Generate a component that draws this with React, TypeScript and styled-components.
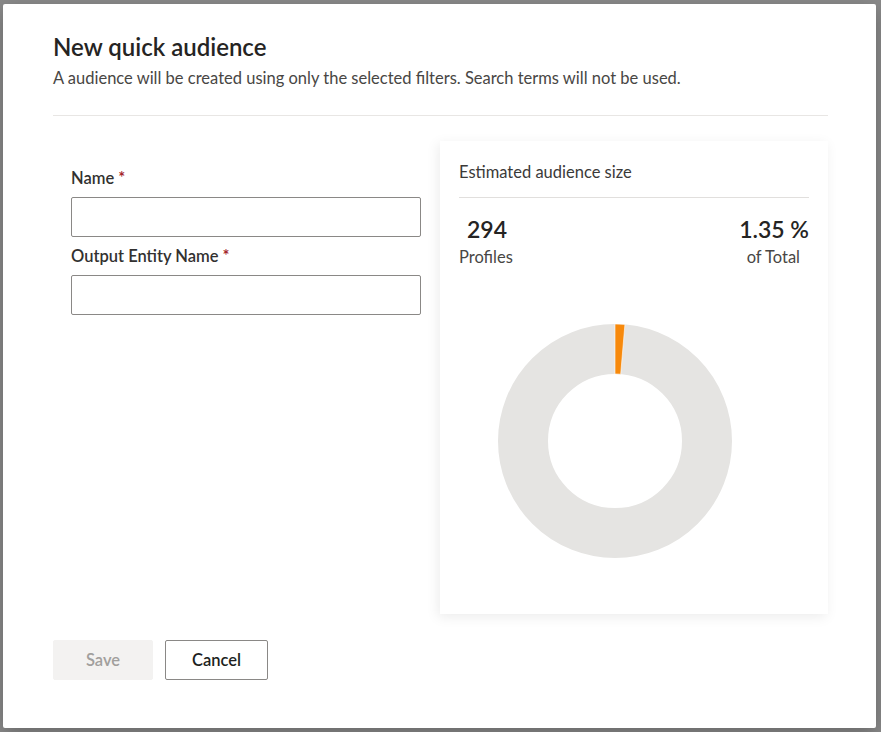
import React from "react";
import styled, { createGlobalStyle } from "styled-components";

const GlobalStyle = createGlobalStyle`
  html, body {
    margin: 0;
    padding: 0;
    font-family: Lato, "Noto Sans", "Liberation Sans", sans-serif;
  }
`;

const Overlay = styled.div`
  width: 881px;
  height: 732px;
  box-sizing: border-box;
  padding: 4px 5px 4px 3px;
  background: #8a8a8a;
`;

const Modal = styled.div`
  width: 100%;
  height: 100%;
  box-sizing: border-box;
  padding: 28px 48px 48px 50px;
  background: #ffffff;
  border-radius: 2px;
  box-shadow: 0 6px 20px rgba(0, 0, 0, 0.25);
  display: flex;
  flex-direction: column;
`;

const Title = styled.h1`
  margin: 0;
  font-size: 24px;
  line-height: 30px;
  font-weight: 600;
  color: #252423;
`;

const Subtitle = styled.p`
  margin: 6px 0 0;
  font-size: 16.5px;
  line-height: 20px;
  color: #484644;
`;

const Divider = styled.hr`
  border: none;
  border-top: 1px solid #e8e6e4;
  margin: 27px 0 0;
`;

const Body = styled.div`
  display: grid;
  grid-template-columns: 387px 388px;
  margin-top: 25px;
`;

const FormColumn = styled.div`
  padding: 27px 19px 0 18px;
  display: flex;
  flex-direction: column;
`;

const Label = styled.label`
  font-size: 16.5px;
  line-height: 20px;
  font-weight: 600;
  color: #323130;
  margin-bottom: 9px;
`;

const Required = styled.span`
  color: #a4262c;
  margin-left: 4px;
`;

const Input = styled.input`
  width: 100%;
  height: 40px;
  box-sizing: border-box;
  border: 1px solid #8a8886;
  border-radius: 2px;
  margin-bottom: 9px;
  padding: 0 10px;
  font-family: inherit;
  font-size: 16px;
  outline: none;
`;

const Card = styled.div`
  height: 473px;
  box-sizing: border-box;
  padding: 21px 19px 0;
  background: #ffffff;
  box-shadow: -2px 3px 12px rgba(0, 0, 0, 0.08);
  display: flex;
  flex-direction: column;
`;

const CardTitle = styled.div`
  font-size: 16.5px;
  line-height: 20px;
  color: #3b3a39;
  padding-bottom: 15px;
  border-bottom: 1px solid #e1dfdd;
`;

const Stats = styled.div`
  display: flex;
  justify-content: space-between;
  margin-top: 16px;
`;

const Stat = styled.div<{ $align: "left" | "right" }>`
  display: flex;
  flex-direction: column;
  align-items: ${(p) => (p.$align === "left" ? "flex-start" : "flex-end")};
`;

const StatValue = styled.div<{ $indent?: number }>`
  font-size: 23px;
  line-height: 30px;
  font-weight: 600;
  color: #252423;
  padding-left: ${(p) => p.$indent || 0}px;
`;

const StatLabel = styled.div<{ $shift?: number }>`
  font-size: 16.5px;
  line-height: 20px;
  color: #484644;
  margin-top: 3px;
  padding-right: ${(p) => p.$shift || 0}px;
`;

const ChartArea = styled.div`
  flex: 1;
  display: flex;
  justify-content: flex-start;
  padding: 57px 0 0 39px;
`;

const Footer = styled.div`
  display: flex;
  gap: 12px;
  margin-top: 26px;
`;

const Button = styled.button<{ $variant: "disabled" | "default" }>`
  height: 40px;
  box-sizing: border-box;
  padding: 0 26px;
  min-width: 100px;
  border-radius: 2px;
  font-family: inherit;
  font-size: 16.5px;
  font-weight: 600;
  cursor: pointer;
  border: 1px solid
    ${(p) => (p.$variant === "disabled" ? "#f3f2f1" : "#8a8886")};
  background: ${(p) => (p.$variant === "disabled" ? "#f3f2f1" : "#ffffff")};
  color: ${(p) => (p.$variant === "disabled" ? "#a19f9d" : "#201f1e")};
`;

const Donut = ({ percent }: { percent: number }) => {
  const outer = 117;
  const inner = 67;
  const cx = 117;
  const cy = 117;
  const angle = (percent / 100) * Math.PI * 2;
  const p = (r: number, a: number) =>
    `${cx + r * Math.sin(a)} ${cy - r * Math.cos(a)}`;
  const slice = `M ${p(outer, 0)} A ${outer} ${outer} 0 0 1 ${p(
    outer,
    angle
  )} L ${p(inner, angle)} A ${inner} ${inner} 0 0 0 ${p(inner, 0)} Z`;
  return (
    <svg width="234" height="234" viewBox="0 0 234 234">
      <circle
        cx={cx}
        cy={cy}
        r={(outer + inner) / 2}
        fill="none"
        stroke="#e5e4e2"
        strokeWidth={outer - inner}
      />
      <path d={slice} fill="#f7890c" stroke="#ffffff" strokeWidth="0.6" />
    </svg>
  );
};

const App = () => {
  return (
    <>
      <GlobalStyle />
      <Overlay>
        <Modal>
          <Title>New quick audience</Title>
          <Subtitle>
            A audience will be created using only the selected filters. Search
            terms will not be used.
          </Subtitle>
          <Divider />
          <Body>
            <FormColumn>
              <Label>
                Name<Required>*</Required>
              </Label>
              <Input />
              <Label>
                Output Entity Name<Required>*</Required>
              </Label>
              <Input />
            </FormColumn>
            <Card>
              <CardTitle>Estimated audience size</CardTitle>
              <Stats>
                <Stat $align="left">
                  <StatValue $indent={8}>294</StatValue>
                  <StatLabel>Profiles</StatLabel>
                </Stat>
                <Stat $align="right">
                  <StatValue>1.35 %</StatValue>
                  <StatLabel $shift={9}>of Total</StatLabel>
                </Stat>
              </Stats>
              <ChartArea>
                <Donut percent={1.35} />
              </ChartArea>
            </Card>
          </Body>
          <Footer>
            <Button $variant="disabled" disabled>
              Save
            </Button>
            <Button $variant="default">Cancel</Button>
          </Footer>
        </Modal>
      </Overlay>
    </>
  );
};

export default App;
